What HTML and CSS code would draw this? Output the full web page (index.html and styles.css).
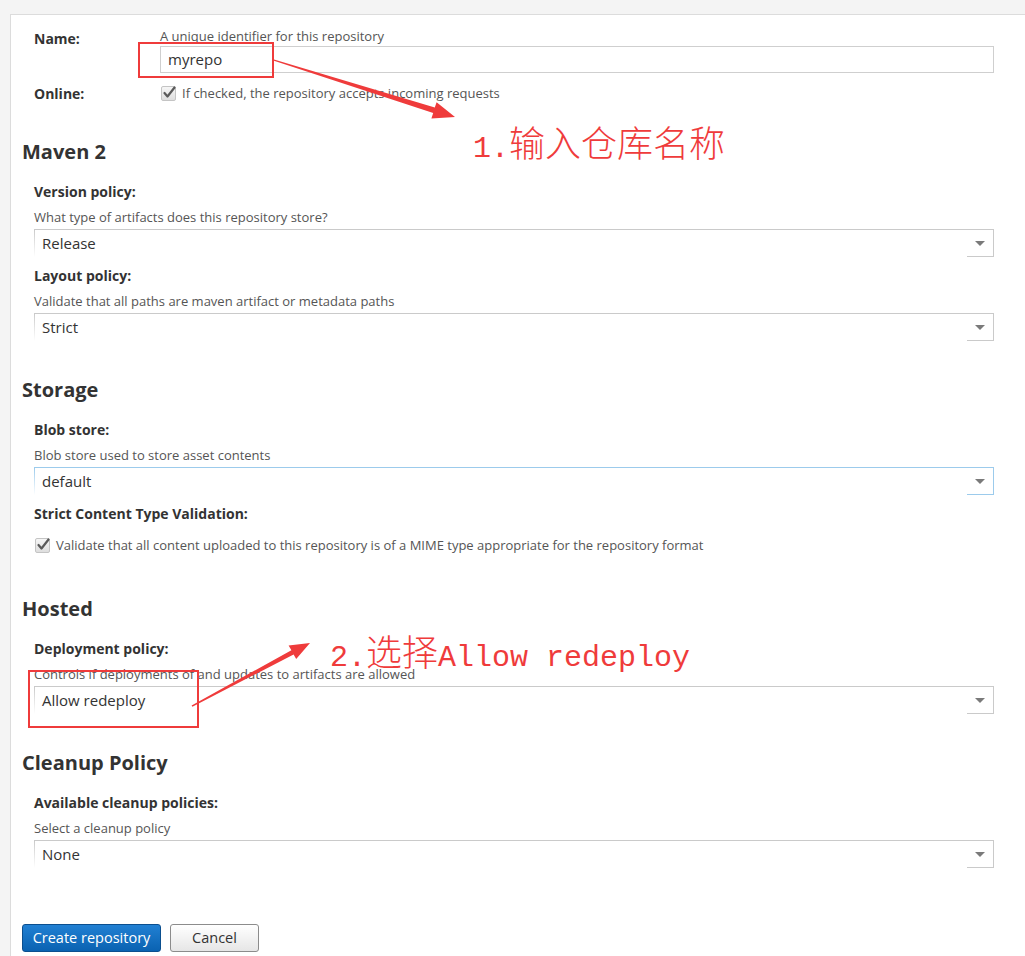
FILE: index.html
```html
<!DOCTYPE html>
<html>
<head>
<meta charset="utf-8">
<link rel="stylesheet" href="styles.css">
</head>
<body>
<div class="panel">
  <div class="form">
    <div class="grid-row name-row">
      <div class="row-label">Name:</div>
      <div class="row-field">
        <div class="help">A unique identifier for this repository</div>
        <div class="text-input">myrepo</div>
      </div>
    </div>
    <div class="grid-row online-row">
      <div class="row-label">Online:</div>
      <div class="row-field check-line">
        <span class="checkbox"><svg width="16" height="16" viewBox="0 0 16 16"><polyline points="3.5,8 6.5,11.5 13.5,2.5" fill="none" stroke="#5a5a5a" stroke-width="2.2" stroke-linecap="round" stroke-linejoin="round"/></svg></span>
        <span class="check-text">If checked, the repository accepts incoming requests</span>
      </div>
    </div>

    <section class="section">
      <h2 class="section-title">Maven 2</h2>
      <div class="field">
        <div class="field-label">Version policy:</div>
        <div class="help">What type of artifacts does this repository store?</div>
        <div class="combo"><div class="combo-input">Release</div><div class="combo-trigger"><span class="arrow"></span></div></div>
      </div>
      <div class="field">
        <div class="field-label">Layout policy:</div>
        <div class="help">Validate that all paths are maven artifact or metadata paths</div>
        <div class="combo"><div class="combo-input">Strict</div><div class="combo-trigger"><span class="arrow"></span></div></div>
      </div>
    </section>

    <section class="section">
      <h2 class="section-title">Storage</h2>
      <div class="field">
        <div class="field-label">Blob store:</div>
        <div class="help">Blob store used to store asset contents</div>
        <div class="combo combo-focus"><div class="combo-input">default</div><div class="combo-trigger"><span class="arrow"></span></div></div>
      </div>
      <div class="field">
        <div class="field-label">Strict Content Type Validation:</div>
        <div class="check-line strict-line">
          <span class="checkbox"><svg width="16" height="16" viewBox="0 0 16 16"><polyline points="3.5,8 6.5,11.5 13.5,2.5" fill="none" stroke="#5a5a5a" stroke-width="2.2" stroke-linecap="round" stroke-linejoin="round"/></svg></span>
          <span class="check-text">Validate that all content uploaded to this repository is of a MIME type appropriate for the repository format</span>
        </div>
      </div>
    </section>

    <section class="section">
      <h2 class="section-title">Hosted</h2>
      <div class="field">
        <div class="field-label">Deployment policy:</div>
        <div class="help">Controls if deployments of and updates to artifacts are allowed</div>
        <div class="combo"><div class="combo-input">Allow redeploy</div><div class="combo-trigger"><span class="arrow"></span></div></div>
      </div>
    </section>

    <section class="section">
      <h2 class="section-title">Cleanup Policy</h2>
      <div class="field">
        <div class="field-label">Available cleanup policies:</div>
        <div class="help">Select a cleanup policy</div>
        <div class="combo"><div class="combo-input">None</div><div class="combo-trigger"><span class="arrow"></span></div></div>
      </div>
    </section>
  </div>

  <div class="buttons">
    <button class="btn btn-primary">Create repository</button>
    <button class="btn btn-default">Cancel</button>
  </div>
</div>

<svg class="annot" width="1025" height="956" viewBox="0 0 1025 956">
  <rect x="139" y="43" width="134" height="34" fill="none" stroke="#ef3b3b" stroke-width="2"/>
  <rect x="29" y="671" width="169" height="56" fill="none" stroke="#ef3b3b" stroke-width="2"/>
  <polygon fill="#ef3b3b" points="274,59.4 434.8,107.6 436.6,102.2 455,117 431.4,118.4 433.2,113 274,60.8"/>
  <polygon fill="#ef3b3b" points="191.6,705.4 291.4,650.2 288.6,645.6 310,643 296.2,659 293.6,654.4 192.4,706.8"/>
</svg>
<div class="note note-1"><span class="note-lat">1.</span>输入仓库名称</div>
<div class="note note-2"><span class="note-lat">2.</span>选择<span class="note-lat">Allow redeploy</span></div>
</body>
</html>
```

FILE: styles.css
```css
html, body {
  margin: 0;
  padding: 0;
}
body {
  background: #f4f4f4;
  font-family: "Open Sans", "Liberation Sans", Arial, sans-serif;
  color: #333;
  width: 1025px;
  height: 956px;
  overflow: hidden;
  position: relative;
}
.panel {
  margin: 14px 0 0 10px;
  border-top: 1px solid #dcdcdc;
  border-left: 1px solid #dcdcdc;
  background: #fff;
  padding: 0 31px 0 11px;
  box-sizing: border-box;
  height: 942px;
  display: flex;
  flex-direction: column;
}
.form {
  display: flex;
  flex-direction: column;
}
.grid-row {
  display: grid;
  grid-template-columns: 126px 1fr;
  margin-left: 12px;
}
.name-row {
  padding-top: 13px;
}
.name-row .row-label {
  padding-top: 2px;
  line-height: 18px;
}
.row-label {
  font-size: 14px;
  font-weight: 700;
  color: #333;
  line-height: 15px;
}
.help {
  font-size: 13px;
  line-height: 15px;
  color: #555;
  white-space: nowrap;
}
.name-row .help {
  line-height: 14px;
  padding-top: 1px;
}
.text-input {
  margin-top: 3px;
  height: 27px;
  box-sizing: border-box;
  border: 1px solid #cfcfcf;
  padding-left: 7px;
  font-size: 15px;
  line-height: 25px;
  color: #333;
}
.online-row {
  margin-top: 13px;
  padding-bottom: 2px;
}
.check-line {
  display: flex;
  align-items: center;
  gap: 6px;
  height: 15px;
}
.online-row .check-line {
  padding-left: 1px;
}
.checkbox {
  position: relative;
  width: 15px;
  height: 15px;
  box-sizing: border-box;
  border: 1px solid #c4c4c4;
  border-radius: 2px;
  background: linear-gradient(#f6f6f6, #dedede);
  flex: none;
}
.checkbox svg {
  position: absolute;
  left: -1px;
  top: -2px;
}
.check-text {
  font-size: 13px;
  color: #555;
  white-space: nowrap;
  line-height: 15px;
}
.strict-line {
  margin-top: 15px;
  padding-left: 1px;
  padding-bottom: 7px;
  box-sizing: content-box;
}
.section {
  margin-top: 37px;
  display: flex;
  flex-direction: column;
}
.section-title {
  margin: 0 0 9px 0;
  font-size: 20px;
  line-height: 24px;
  font-weight: 700;
  color: #333;
}
.field {
  margin-left: 12px;
  margin-top: 10px;
  display: flex;
  flex-direction: column;
}
.field-label {
  font-size: 14px;
  line-height: 18px;
  font-weight: 700;
  color: #333;
}
.field .help {
  margin-top: 9px;
}
.combo {
  margin-top: 4px;
  display: flex;
  height: 28px;
  --bc: #cacaca;
}
.combo-focus {
  --bc: #9ccbec;
}
.combo-input {
  flex: 1;
  border-top: 1px solid var(--bc);
  background: linear-gradient(var(--bc), rgba(255,255,255,0)) no-repeat left top / 1px 100%;
  padding-left: 8px;
  font-size: 15px;
  line-height: 27px;
  color: #333;
}
.combo-trigger {
  width: 27px;
  box-sizing: border-box;
  border-top: 1px solid var(--bc);
  border-right: 1px solid var(--bc);
  border-bottom: 1px solid var(--bc);
  display: flex;
  align-items: center;
  justify-content: center;
}
.arrow {
  width: 0;
  height: 0;
  border-left: 5px solid transparent;
  border-right: 5px solid transparent;
  border-top: 5px solid #7a7a7a;
  margin-left: -1px;
}
.buttons {
  margin-top: 56px;
  display: flex;
  gap: 9px;
}
.btn {
  height: 28px;
  box-sizing: border-box;
  border-radius: 3px;
  font-family: "Open Sans", "Liberation Sans", Arial, sans-serif;
  font-size: 14.5px;
  line-height: 24px;
  padding: 0;
  cursor: pointer;
}
.btn-primary {
  width: 139px;
  color: #fff;
  border: 1px solid #0b4f8f;
  background: linear-gradient(#2180d3, #0a62b1);
}
.btn-default {
  width: 89px;
  color: #333;
  border: 1px solid #8c8c8c;
  background: linear-gradient(#ffffff, #e6e6e6);
}
.annot {
  position: absolute;
  left: 0;
  top: 0;
  pointer-events: none;
}
.note {
  position: absolute;
  color: #ef3b3b;
  font-family: "Noto Sans CJK SC", sans-serif;
  font-weight: 300;
  font-size: 36px;
  line-height: 34px;
  white-space: nowrap;
}
.note-lat {
  font-family: "Liberation Mono", monospace;
  font-size: 30px;
  font-weight: 400;
  line-height: 30px;
}
.note-1 {
  left: 473px;
  top: 124px;
}
.note-2 {
  left: 330px;
  top: 633px;
}
```
